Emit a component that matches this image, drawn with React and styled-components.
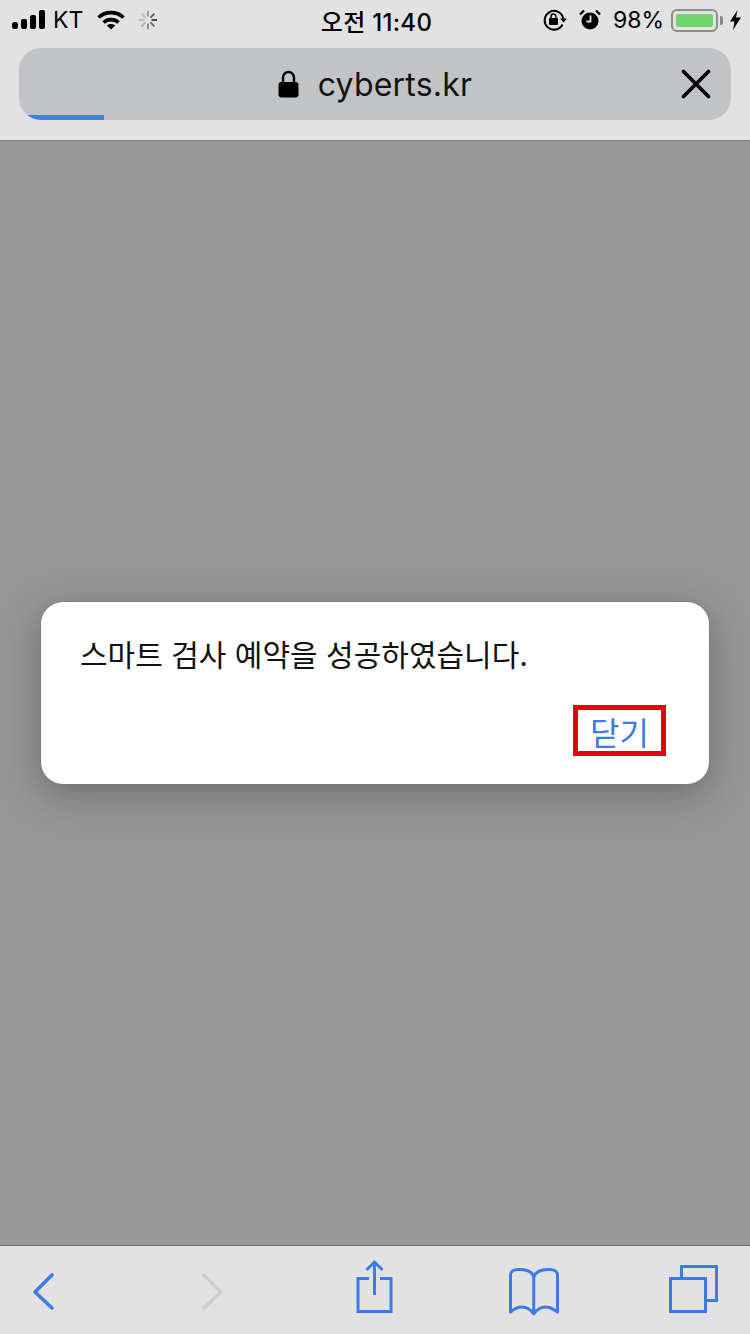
import React from 'react'
import styled, { createGlobalStyle } from 'styled-components'

const Global = createGlobalStyle`
  html, body { margin: 0; padding: 0; background: #e2e2e2; }
  * { box-sizing: border-box; }
`

const Screen = styled.div`
  width: 750px;
  height: 1334px;
  display: flex;
  flex-direction: column;
  overflow: hidden;
  font-family: Inter, "Noto Sans CJK KR", sans-serif;
  color: #000;
`

const Header = styled.header`
  height: 141px;
  flex: none;
  background: #e2e2e2;
  border-bottom: 1px solid #7e7e7e;
  padding: 0 19px;
`

const StatusBar = styled.div`
  height: 48px;
  margin: 0 -10px 0 -7px;
  padding: 0 0 8px 0;
  display: grid;
  grid-template-columns: 1fr auto 1fr;
  align-items: center;
`

const StatusGroup = styled.div`
  display: flex;
  align-items: center;
  justify-content: ${p => (p.$end ? 'flex-end' : 'flex-start')};
`

const Carrier = styled.span`
  font-size: 23px;
  margin: 0 14px 0 7px;
`

const Clock = styled.span`
  font-size: 24px;
  font-weight: 500;
  letter-spacing: 0.3px;
`

const Percent = styled.span`
  font-size: 23px;
  margin: 0 7px 0 12px;
`

const Battery = styled.div`
  width: 47px;
  height: 23px;
  padding: 3px;
  border: 2px solid #8c8c8c;
  border-radius: 6px;
  position: relative;
  &::after {
    content: '';
    position: absolute;
    right: -7px;
    top: 5px;
    width: 3px;
    height: 9px;
    background: #8c8c8c;
    border-radius: 0 2px 2px 0;
  }
`

const BatteryFill = styled.div`
  height: 100%;
  background: #6fd36f;
  border-radius: 2px;
`

const UrlBar = styled.div`
  position: relative;
  height: 72px;
  background: #c2c3c7;
  border-radius: 22px;
  overflow: hidden;
  display: grid;
  grid-template-columns: 1fr auto 1fr;
  align-items: center;
`

const Address = styled.div`
  grid-column: 2;
  display: flex;
  align-items: center;
  gap: 19px;
  font-size: 32px;
  letter-spacing: 0.2px;
  color: #141414;
`

const CloseButton = styled.div`
  justify-self: end;
  display: flex;
  margin-right: 20px;
`

const Progress = styled.div`
  position: absolute;
  left: 0;
  bottom: 0;
  height: 5px;
  width: 85px;
  background: #3d7ef0;
`

const Content = styled.main`
  flex: 1;
  background: #969696;
  display: flex;
  align-items: center;
  justify-content: center;
`

const Dialog = styled.div`
  width: 668px;
  height: 182px;
  background: #fff;
  border-radius: 22px;
  box-shadow: 0 0 0 1px rgba(120, 120, 120, 0.5), 0 10px 40px rgba(0, 0, 0, 0.28);
  padding: 33px 43px 28px 39px;
  display: flex;
  flex-direction: column;
  justify-content: space-between;
`

const Message = styled.p`
  margin: 0;
  font-size: 30px;
  line-height: 40px;
  color: #111;
`

const CloseLink = styled.div`
  align-self: flex-end;
  width: 93px;
  height: 51px;
  border: 5px solid #e60012;
  color: #3b7ae8;
  font-size: 32px;
  display: flex;
  align-items: center;
  justify-content: center;
`

const Toolbar = styled.footer`
  height: 89px;
  flex: none;
  background: #e2e2e2;
  border-top: 1px solid #6e6e6e;
  padding: 0 31px 0 18px;
  display: flex;
  align-items: center;
  justify-content: space-between;
`

const ToolIcon = styled.svg`
  width: 50px;
  height: 60px;
  fill: none;
  stroke: ${p => (p.$off ? '#cdcdcd' : '#3d7be6')};
  stroke-width: ${p => p.$w || 3}px;
  overflow: visible;
`

const Signal = () => (
  <svg width="34" height="20" viewBox="0 0 34 20">
    <rect x="0" y="12" width="6" height="7" rx="2.5" />
    <rect x="9" y="9" width="6" height="10" rx="2" />
    <rect x="18" y="5" width="6" height="14" rx="2" />
    <rect x="27" y="0" width="6" height="19" rx="2" />
  </svg>
)

const Wifi = () => (
  <svg width="28" height="20" viewBox="0 0 28 20" fill="none" stroke="#000" strokeWidth="3.6" style={{ marginRight: 13 }}>
    <path d="M1.5 7.5C8.5 1 19.5 1 26.5 7.5" />
    <path d="M6.5 12.5C10.5 8.7 17.5 8.7 21.5 12.5" />
    <path d="M14 19.5L9.8 15.6C12.2 13.6 15.8 13.6 18.2 15.6Z" fill="#000" stroke="none" />
  </svg>
)

const Spinner = () => {
  const spokes = [0, 45, 90, 135, 180, 225, 270, 315]
  const shades = ['#9a9a9a', '#555', '#333', '#666', '#888', '#aaa', '#bbb', '#bbb']
  return (
    <svg width="20" height="20" viewBox="0 0 20 20">
      {spokes.map((a, i) => (
        <line key={a} x1="10" y1="1" x2="10" y2="6.5" stroke={shades[i]} strokeWidth="1.8" transform={`rotate(${a} 10 10)`} />
      ))}
    </svg>
  )
}

const RotationLock = () => (
  <svg width="24" height="22" viewBox="0 0 24 22" fill="none" stroke="#000" strokeWidth="2" style={{ marginRight: 12 }}>
    <path d="M19.5 15.5A9.4 9.4 0 1 1 20.3 9.5" />
    <path d="M17 9.5H24L20.5 13.5Z" fill="#000" stroke="none" />
    <rect x="6" y="9" width="9" height="7" rx="1" fill="#000" stroke="none" />
    <path d="M8 9.5V7.5A2.5 2.5 0 0 1 13 7.5V9.5" strokeWidth="1.5" />
  </svg>
)

const Alarm = () => (
  <svg width="22" height="22" viewBox="0 0 22 22">
    <circle cx="11" cy="12" r="8.5" />
    <path d="M1 5.5L5 1.5M21 5.5L17 1.5" stroke="#000" strokeWidth="2.4" />
    <path d="M11.5 6.5V12.5H7.5" fill="none" stroke="#e2e2e2" strokeWidth="1.8" />
  </svg>
)

const Bolt = () => (
  <svg width="11" height="20" viewBox="0 0 11 20" style={{ marginLeft: 12 }}>
    <path d="M7.5 0L0 11.5H4.5L3 20L11 7.5H6Z" />
  </svg>
)

const Lock = () => (
  <svg width="21" height="28" viewBox="0 0 21 28">
    <path d="M5 13V7.5A5.5 5.5 0 0 1 16 7.5V13" fill="none" stroke="#000" strokeWidth="2.4" />
    <rect x="0.5" y="12" width="20" height="15.5" rx="3" />
  </svg>
)

const Cross = () => (
  <svg width="30" height="30" viewBox="0 0 30 30" fill="none" stroke="#000" strokeWidth="3.6" strokeLinecap="round">
    <path d="M2.5 2.5L27.5 27.5M27.5 2.5L2.5 27.5" />
  </svg>
)

export default function App() {
  return (
    <Screen>
      <Global />
      <Header>
        <StatusBar>
          <StatusGroup>
            <Signal />
            <Carrier>KT</Carrier>
            <Wifi />
            <Spinner />
          </StatusGroup>
          <Clock>오전 11:40</Clock>
          <StatusGroup $end>
            <RotationLock />
            <Alarm />
            <Percent>98%</Percent>
            <Battery><BatteryFill /></Battery>
            <Bolt />
          </StatusGroup>
        </StatusBar>
        <UrlBar>
          <Address>
            <Lock />
            <span>cyberts.kr</span>
          </Address>
          <CloseButton><Cross /></CloseButton>
          <Progress />
        </UrlBar>
      </Header>
      <Content>
        <Dialog>
          <Message>스마트 검사 예약을 성공하였습니다.</Message>
          <CloseLink>닫기</CloseLink>
        </Dialog>
      </Content>
      <Toolbar>
        <ToolIcon viewBox="0 0 50 60" $w={3.6} strokeLinecap="round" strokeLinejoin="round">
          <path d="M34 15L17 32L34 48" />
        </ToolIcon>
        <ToolIcon viewBox="0 0 50 60" $off $w={3.6} strokeLinecap="round" strokeLinejoin="round">
          <path d="M23 15L40 32L23 48" />
        </ToolIcon>
        <ToolIcon viewBox="0 0 50 60">
          <path d="M25 18.5H14V51.5H47V18.5H36" />
          <path d="M30.5 2V35M22.5 10L30.5 2L38.5 10" />
        </ToolIcon>
        <ToolIcon viewBox="0 0 50 60" strokeLinejoin="round">
          <path d="M27.75 17C26 11 20 9.5 14 9.5H12C8 9.5 4.5 11.5 4.5 15V52C8 49 12 47 16 47C21 47 25 50 27.75 54C30.5 50 34.5 47 39.5 47C43.5 47 47.5 49 51.5 52V15C51.5 11.5 48 9.5 44 9.5H42C36 9.5 30 11 27.75 17V54" />
        </ToolIcon>
        <ToolIcon viewBox="0 0 50 60">
          <rect x="1.5" y="18.5" width="35" height="33" />
          <path d="M12.5 18.5V6.5H47.5V40.5H36.5" />
        </ToolIcon>
      </Toolbar>
    </Screen>
  )
}
